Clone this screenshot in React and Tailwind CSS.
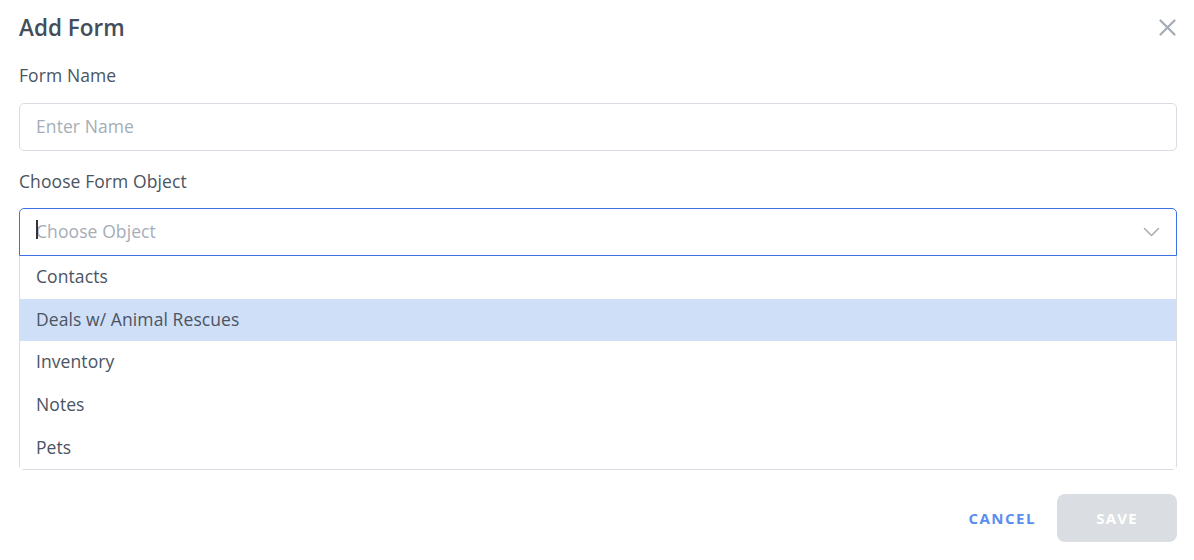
const options = ["Contacts", "Deals w/ Animal Rescues", "Inventory", "Notes", "Pets"];

const App = () => {
  return (
    <div className="h-[560px] w-[1194px] bg-white pl-[19px] pr-[17px] pt-[13px] text-[#4a5462]" style={{ fontFamily: "'Open Sans', sans-serif" }}>
      <div className="flex h-[29px] items-center justify-between">
        <h2 className="text-[22.5px] font-semibold text-[#434d5b]">Add Form</h2>
        <button type="button" className="mr-[1px] text-[#a4acb6]">
          <svg width="17" height="17" viewBox="0 0 17 17" fill="none" stroke="currentColor" strokeWidth="2.2" strokeLinecap="round">
            <path d="M1.5 1.5l14 14M15.5 1.5l-14 14" />
          </svg>
        </button>
      </div>

      <label className="mt-[22px] block text-[17.5px] leading-[22px] tracking-[0.005em] text-[#4a5462]">Form Name</label>
      <div className="mt-[17px] flex h-[48px] items-center rounded-[5px] border border-[#d9dde3] px-[16px] pb-[2px]">
        <span className="text-[17.5px] tracking-[0.005em] text-[#a5adb7]">Enter Name</span>
      </div>

      <label className="mt-[19px] block text-[17.5px] leading-[22px] tracking-[0.005em] text-[#4a5462]">Choose Form Object</label>
      <div className="mt-[16px]">
        <div className="flex h-[48px] items-center justify-between rounded-t-[5px] border border-[#3d6fe6] px-[16px] pb-[2px]">
          <span className="relative text-[17.5px] tracking-[0.005em] text-[#a5adb7]">
            <span className="absolute left-[0px] top-[2px] h-[19px] w-[1.5px] bg-[#333]" />
            Choose Object
          </span>
          <svg className="mt-[2px]" width="17" height="10" viewBox="0 0 17 10" fill="none" stroke="#a9b0ba" strokeWidth="1.6" strokeLinecap="round" strokeLinejoin="round">
            <path d="M1.5 1.5l7 7 7-7" />
          </svg>
        </div>
        <ul className="rounded-b-[5px] border-x border-b border-[#d9dde3]">
          {options.map((option) => (
            <li
              key={option}
              className={`flex h-[42.6px] items-center px-[16px] pb-[2px] text-[17.5px] tracking-[0.005em] text-[#4a5462] ${option === "Deals w/ Animal Rescues" ? "bg-[#d0dff8]" : "bg-white"}`}
            >
              {option}
            </li>
          ))}
        </ul>
      </div>

      <div className="mt-[24px] flex items-center justify-end gap-[20px]">
        <button type="button" className="px-[1px] text-[15px] font-bold tracking-[0.1em] text-[#5b8def]">
          CANCEL
        </button>
        <button type="button" className="flex h-[48px] w-[120px] items-center justify-center rounded-[8px] bg-[#dadde1] text-[15px] font-bold tracking-[0.08em] text-white">
          SAVE
        </button>
      </div>
    </div>
  );
};

export default App;
